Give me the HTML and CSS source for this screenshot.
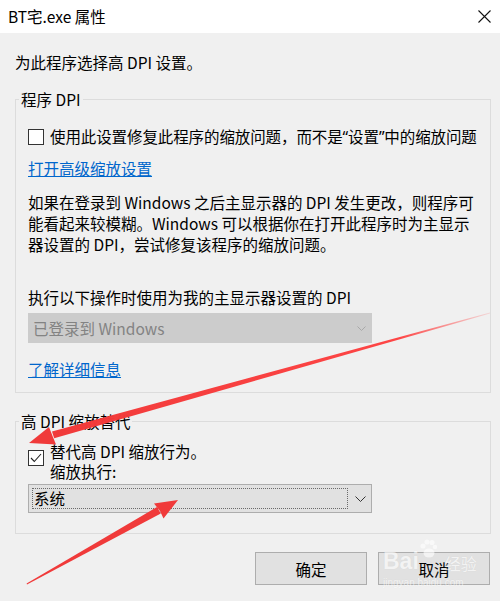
FILE: index.html
```html
<!DOCTYPE html>
<html lang="zh-CN">
<head>
<title>BT宅.exe 属性</title>
<meta charset="utf-8">
<link rel="stylesheet" href="styles.css">
</head>
<body>

<div class="title_bar">
	<span class="title_txt">BT宅.exe 属性</span>
	<svg class="btn_close" width="13" height="13" viewBox="0 0 13 13"><path d="M0.5 0.5L12.5 12.5M12.5 0.5L0.5 12.5" stroke="#111" stroke-width="1.1" fill="none"/></svg>
</div>

<div class="dialog">
	<p class="intro">为此程序选择高 DPI 设置。</p>

	<fieldset class="group group_dpi">
		<legend>程序 DPI</legend>
		<label class="chk_row">
			<span class="chk"></span>
			<span class="chk_txt">使用此设置修复此程序的缩放问题，而不是<span class="q">“</span>设置<span class="q">”</span>中的缩放问题</span>
		</label>
		<a href="#" class="link link_adv">打开高级缩放设置</a>
		<p class="desc">如果在登录到 Windows 之后主显示器的 DPI 发生更改，则程序可<br>能看起来较模糊。Windows 可以根据你在打开此程序时为主显示<br>器设置的 DPI，尝试修复该程序的缩放问题。</p>
		<p class="label_sel">执行以下操作时使用为我的主显示器设置的 DPI</p>
		<div class="sel sel_off">
			<span>已登录到 Windows</span>
			<svg class="chev" width="9" height="5" viewBox="0 0 9 5"><path d="M0.5 0.5L4.5 4.5L8.5 0.5" stroke="#a8a8a8" fill="none"/></svg>
		</div>
		<a href="#" class="link link_more">了解详细信息</a>
	</fieldset>

	<fieldset class="group group_over">
		<legend>高 DPI 缩放替代</legend>
		<label class="chk_row chk_row2">
			<span class="chk chk_on"><svg width="12" height="10" viewBox="0 0 12 10"><path d="M1 5L4.3 8.5L11 1" stroke="#222" stroke-width="1.1" fill="none"/></svg></span>
			<span>替代高 DPI 缩放行为。<br>缩放执行:</span>
		</label>
		<div class="sel sel_on">
			<span class="sel_focus">系统</span>
			<svg class="chev" width="11" height="6" viewBox="0 0 11 6"><path d="M0.5 0.5L5.5 5.5L10.5 0.5" stroke="#333" fill="none"/></svg>
		</div>
	</fieldset>

	<div class="btn_row">
		<button class="btn">确定</button>
		<button class="btn">取消</button>
	</div>
</div>

<!-- 워터마크 -->
<div class="watermark">
	<div class="wm_top">
		<span class="wm_bai">Bai</span>
		<svg class="wm_paw" width="18" height="20" viewBox="0 0 18 20"><circle cx="4" cy="7" r="2.6" fill="#fff"/><circle cx="8" cy="3" r="2.6" fill="#fff"/><circle cx="13" cy="3.5" r="2.6" fill="#fff"/><circle cx="16" cy="8" r="2.3" fill="#fff"/><ellipse cx="10" cy="14" rx="5.5" ry="4.5" fill="#fff"/></svg>
		<span class="wm_jy">经验</span>
	</div>
	<div class="wm_url">jingyan.baidu.com</div>
</div>

<!-- 빨간 화살표 -->
<svg class="arrows" width="500" height="601" viewBox="0 0 500 601">
	<defs>
		<linearGradient id="fade1" x1="490" y1="313" x2="40" y2="440" gradientUnits="userSpaceOnUse">
			<stop offset="0" stop-color="#f44" stop-opacity="0.15"/>
			<stop offset="0.2" stop-color="#f33" stop-opacity="0.9"/>
			<stop offset="1" stop-color="#f03a3a"/>
		</linearGradient>
	</defs>
	<polygon points="490,312.6 490,313.4 54.2,438.2 52,431.4" fill="url(#fade1)"/>
	<polygon points="29,443 56,444.5 52.5,436 49,427" fill="#f03a3a"/>
	<polygon points="27,584.4 26.6,583.6 157,507 160.8,513.6" fill="#f03a3a"/>
	<polygon points="178,500 163.5,518.5 160,511 154,503.5" fill="#f03a3a"/>
</svg>

</body>
</html>
```

FILE: styles.css
```css
body,div,p,fieldset,legend,button,a,span{margin:0;padding:0;}
html,body{width:500px;height:601px;overflow:hidden;}
body{position:relative;background:#f0f0f0;color:#000;font-family:"Noto Sans CJK SC","Noto Sans",sans-serif;font-size:15.5px;line-height:21px;}
/**/
.title_bar{display:flex;align-items:center;justify-content:space-between;height:33px;padding:0 9px 0 8px;background:#fff;}
.title_txt{font-size:15.5px;}
.btn_close{display:block;margin-top:-1px;}

.dialog{padding:0 10px 0 15px;}
.intro{margin-top:19px;}

.group{box-sizing:border-box;width:476px;margin:16px 0 0;padding:0 12px 12px;border:1px solid #dcdcdc;}
.group legend{margin-left:-9px;padding:0 2px;line-height:21px;}
.group_over{margin-top:18px;padding-bottom:20px;}

.chk_row{display:flex;align-items:center;margin-top:16px;white-space:nowrap;}
.chk_txt{letter-spacing:-0.1px;}
.chk_txt .q{font-family:"Noto Sans",sans-serif;}
.chk{display:flex;align-items:center;justify-content:center;flex:none;box-sizing:border-box;width:16px;height:16px;margin-right:6px;border:1px solid #333;background:#fff;}
.chk_row2{align-items:flex-start;margin-top:9px;line-height:20px;}
.chk_row2 .chk{margin-top:9px;}

.link{display:inline-block;color:#0066cc;text-decoration:underline;}
.link_adv{margin-top:10px;}
.desc{margin-top:13px;}
.label_sel{margin-top:32px;}
.link_more{margin-top:16px;}

.sel{display:flex;align-items:center;justify-content:space-between;box-sizing:border-box;width:344px;height:30px;padding:0 6px 0 4px;}
.sel_off{margin-top:5px;padding-left:5px;background:#cccccc;color:#838383;}
.sel_on{height:29px;margin-top:3px;padding-left:3px;border:1px solid #adadad;background:#e1e1e1;}
.sel_focus{box-sizing:border-box;width:316px;height:21px;line-height:19px;padding-left:1px;border:1px dotted #6a6a6a;}
.sel_on .chev{margin-right:-1px;}

.btn_row{display:flex;justify-content:flex-end;gap:11px;margin-top:18px;}
.btn{box-sizing:border-box;width:112px;height:33px;border:1px solid #adadad;background:#e1e1e1;color:#000;font-family:inherit;font-size:15.5px;}

.watermark{position:absolute;left:383px;top:531px;width:95px;color:#fff;opacity:0.6;text-shadow:0 0 1px rgba(0,0,0,0.1);}
.wm_top{display:flex;align-items:flex-end;}
.wm_bai{font-family:"Liberation Sans",sans-serif;font-weight:bold;font-size:23px;line-height:24px;margin-top:18px;}
.wm_paw{margin:0 -2px 14px 0;}
.wm_jy{font-size:16px;line-height:20px;margin-left:10px;}
.wm_url{margin-top:4px;font-family:"Liberation Sans",sans-serif;font-size:10px;line-height:12px;}

.arrows{position:absolute;left:0;top:0;pointer-events:none;}
```
